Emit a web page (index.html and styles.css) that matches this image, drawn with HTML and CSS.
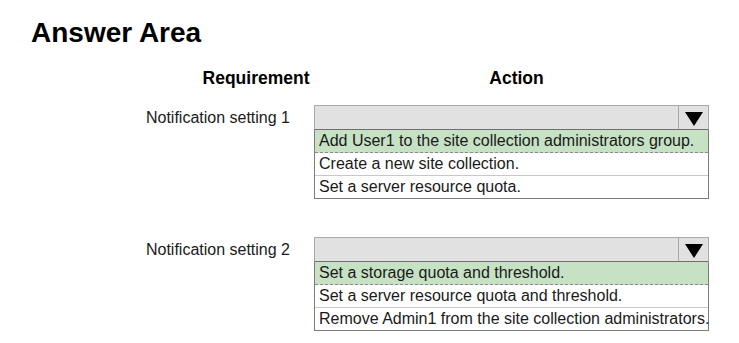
FILE: index.html
```html
<!DOCTYPE html>
<html lang="en">
<head>
    <meta charset="UTF-8">
    <meta name="viewport" content="width=device-width, initial-scale=1.0">
    <title>Answer Area</title>
    <link rel="stylesheet" href="styles.css">
</head>
<body>
<div class="page">
    <h1 class="title">Answer Area</h1>

    <div class="col-heads">
        <div class="col-head req">Requirement</div>
        <div class="col-head act">Action</div>
    </div>

    <div class="rows">
        <div class="row">
            <div class="row-label">Notification setting 1</div>
            <div class="dropdown">
                <div class="dd-header">
                    <div class="dd-value"></div>
                    <div class="dd-arrow"><span class="tri"></span></div>
                </div>
                <ul class="dd-list">
                    <li class="dd-option selected">Add User1 to the site collection administrators group.</li>
                    <li class="dd-option">Create a new site collection.</li>
                    <li class="dd-option">Set a server resource quota.</li>
                </ul>
            </div>
        </div>

        <div class="row">
            <div class="row-label">Notification setting 2</div>
            <div class="dropdown">
                <div class="dd-header">
                    <div class="dd-value"></div>
                    <div class="dd-arrow"><span class="tri"></span></div>
                </div>
                <ul class="dd-list">
                    <li class="dd-option selected">Set a storage quota and threshold.</li>
                    <li class="dd-option">Set a server resource quota and threshold.</li>
                    <li class="dd-option">Remove Admin1 from the site collection administrators.</li>
                </ul>
            </div>
        </div>
    </div>
</div>
</body>
</html>
```

FILE: styles.css
```css
:root {
    --text-color: #111111;
    --header-bg: #e1e1e1;
    --header-border: #a9a9a9;
    --list-border: #7c7c7c;
    --divider: #c8c8c8;
    --selected-bg: #c6e1c4;
}

body {
    font-family: "Liberation Sans", Arial, sans-serif;
    color: var(--text-color);
    background: #ffffff;
    margin: 0;
}

.page {
    width: 739px;
    padding-top: 17px;
}

.title {
    font-size: 28px;
    line-height: 32px;
    font-weight: 700;
    margin: 0 0 0 31px;
    color: #000;
}

.col-heads {
    display: flex;
    margin-top: 19px;
    padding-left: 156px;
}

.col-head {
    font-size: 17.5px;
    line-height: 20px;
    font-weight: 700;
    text-align: center;
    color: #000;
}

.col-head.req {
    width: 200px;
}

.col-head.act {
    width: 321px;
}

.rows {
    display: flex;
    flex-direction: column;
    gap: 38px;
    margin-top: 17px;
}

.row {
    display: grid;
    grid-template-columns: 290px 395px;
    column-gap: 24px;
    align-items: start;
}

.row-label {
    font-size: 16px;
    line-height: 25px;
    text-align: right;
    color: #1a1a1a;
}

.dropdown {
    width: 395px;
}

.dd-header {
    display: flex;
    height: 23px;
    background: var(--header-bg);
    border: 1px solid var(--header-border);
    border-bottom-color: #6f6f6f;
}

.dd-value {
    flex: 1;
}

.dd-arrow {
    width: 29px;
    border-left: 1px solid var(--header-border);
    display: flex;
    align-items: center;
    justify-content: center;
}

.tri {
    width: 0;
    height: 0;
    border-left: 9px solid transparent;
    border-right: 9px solid transparent;
    border-top: 14px solid #000;
    margin-top: 2px;
}

.dd-list {
    list-style: none;
    margin: 0;
    padding: 0;
    border: 1px solid var(--list-border);
    border-top: none;
}

.dd-option {
    height: 22px;
    line-height: 22px;
    font-size: 16px;
    padding-left: 4px;
    white-space: nowrap;
    border-bottom: 1px solid var(--divider);
    color: #1a1a1a;
}

.dd-option:last-child {
    border-bottom: none;
}

.dd-option.selected {
    background: var(--selected-bg);
    border-bottom: 1px dashed #8a8a8a;
}
```
